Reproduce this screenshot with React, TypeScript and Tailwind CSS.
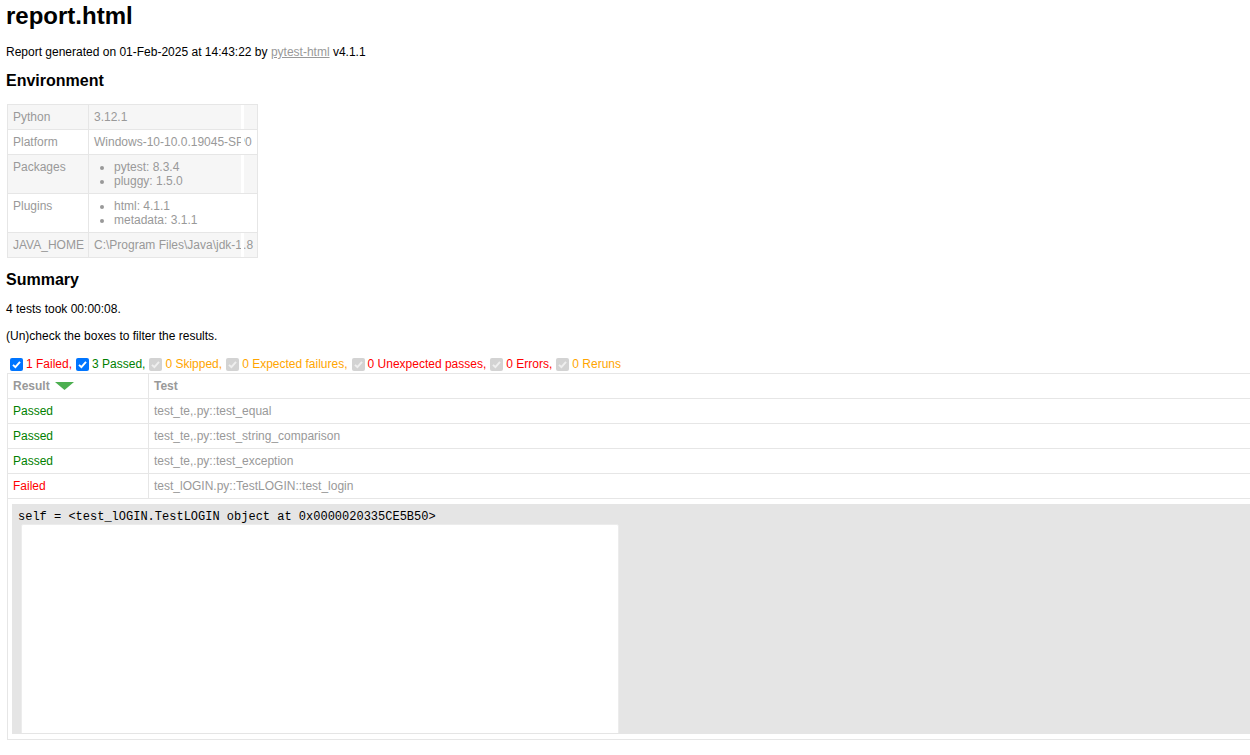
import React from "react";

type EnvRow = {
  label: string;
  value?: string;
  items?: string[];
  odd: boolean;
};

const envRows: EnvRow[] = [
  { label: "Python", value: "3.12.1", odd: true },
  { label: "Platform", value: "Windows-10-10.0.19045-SP0", odd: false },
  { label: "Packages", items: ["pytest: 8.3.4", "pluggy: 1.5.0"], odd: true },
  { label: "Plugins", items: ["html: 4.1.1", "metadata: 3.1.1"], odd: false },
  { label: "JAVA_HOME", value: "C:\\Program Files\\Java\\jdk-1.8", odd: true },
];

const filters = [
  { label: "1 Failed,", color: "text-[#ff0000]", on: true },
  { label: "3 Passed,", color: "text-[#008000]", on: true },
  { label: "0 Skipped,", color: "text-[#ffa500]", on: false },
  { label: "0 Expected failures,", color: "text-[#ffa500]", on: false },
  { label: "0 Unexpected passes,", color: "text-[#ff0000]", on: false },
  { label: "0 Errors,", color: "text-[#ff0000]", on: false },
  { label: "0 Reruns", color: "text-[#ffa500]", on: false },
];

const results = [
  { result: "Passed", test: "test_te,.py::test_equal" },
  { result: "Passed", test: "test_te,.py::test_string_comparison" },
  { result: "Passed", test: "test_te,.py::test_exception" },
  { result: "Failed", test: "test_lOGIN.py::TestLOGIN::test_login" },
];

const Checkbox = ({ on }: { on: boolean }) => (
  <span
    className={`ml-[4px] mr-[3px] flex h-[13px] w-[13px] items-center justify-center rounded-[2px] ${
      on ? "bg-[#0075ff]" : "bg-[#d3d3d3]"
    }`}
  >
    <svg width="11" height="11" viewBox="0 0 11 11">
      <path
        d="M2 5.8 L4.4 8.2 L9 2.8"
        fill="none"
        stroke={on ? "#ffffff" : "#efefef"}
        strokeWidth="1.9"
      />
    </svg>
  </span>
);

const App = () => {
  return (
    <div className="min-h-screen overflow-hidden bg-white px-[6px] font-['Liberation_Sans',Arial,sans-serif] text-[12px] leading-[14px] text-[#999]">
      <h1 className="pt-[2px] text-[24px] font-bold leading-[28px] text-black">
        report.html
      </h1>
      <p className="mt-[15px] text-black">
        Report generated on 01-Feb-2025 at 14:43:22 by{" "}
        <span className="text-[#999] underline">pytest-html</span> v4.1.1
      </p>
      <h2 className="mt-[13px] text-[16px] font-bold leading-[18px] text-black">
        Environment
      </h2>

      <div className="ml-[1px] mt-[14px] w-[251px] border border-[#e6e6e6]">
        {envRows.map((row, i) => (
          <div
            key={row.label}
            className={`flex ${i > 0 ? "border-t border-[#e6e6e6]" : ""} ${
              row.odd ? "bg-[#f6f6f6]" : "bg-white"
            }`}
          >
            <div className="w-[81px] shrink-0 border-r border-[#e6e6e6] p-[5px] whitespace-nowrap">
              {row.label}
            </div>
            <div className="w-[152px] shrink-0 overflow-hidden whitespace-nowrap p-[5px]">
              {row.value}
              {row.items && (
                <ul className="list-disc pl-[20px]">
                  {row.items.map((item) => (
                    <li key={item}>{item}</li>
                  ))}
                </ul>
              )}
            </div>
            <div className="w-[3px] shrink-0 bg-white" />
            <div className="flex-1 overflow-hidden whitespace-nowrap py-[5px]">
              {row.value && (
                <span className="ml-[-149px] block">{row.value}</span>
              )}
            </div>
          </div>
        ))}
      </div>

      <h2 className="mt-[13px] text-[16px] font-bold leading-[18px] text-black">
        Summary
      </h2>
      <p className="mt-[13px] text-black">4 tests took 00:00:08.</p>
      <p className="mt-[13px] text-black">
        (Un)check the boxes to filter the results.
      </p>

      <div className="mt-[13px] flex h-[17px] items-start">
        {filters.map((f) => (
          <div key={f.label} className="flex items-center pt-[1px]">
            <Checkbox on={f.on} />
            <span className={`${f.color} whitespace-nowrap`}>{f.label}</span>
          </div>
        ))}
      </div>

      <div className="ml-[1px] w-[1300px] border border-[#e6e6e6]">
        <div className="flex border-b border-[#e6e6e6] font-bold">
          <div className="flex w-[141px] shrink-0 items-center border-r border-[#e6e6e6] p-[5px]">
            Result
            <svg className="ml-[5px]" width="19" height="8" viewBox="0 0 19 8">
              <polygon points="0,0 19,0 9.5,8" fill="#4caf50" />
            </svg>
          </div>
          <div className="flex-1 p-[5px]">Test</div>
        </div>

        {results.map((r) => (
          <div key={r.test} className="flex border-b border-[#e6e6e6]">
            <div
              className={`w-[141px] shrink-0 border-r border-[#e6e6e6] p-[5px] ${
                r.result === "Passed" ? "text-[#008000]" : "text-[#ff0000]"
              }`}
            >
              {r.result}
            </div>
            <div className="flex-1 p-[5px]">{r.test}</div>
          </div>
        ))}

        <div className="py-[5px] pl-[4px]">
          <div className="h-[230px] overflow-hidden border border-[#e5e5e5] bg-[#e5e5e5] px-[5px] pt-[5px]">
            <div className="font-['Liberation_Mono','Courier_New',monospace] text-[12px] leading-[14px] text-black whitespace-pre">
              {"self = <test_lOGIN.TestLOGIN object at 0x0000020335CE5B50>"}
            </div>
            <div className="ml-[3px] mt-[0px] h-[260px] w-[598px] rounded-[2px] border border-[#ececec] bg-white" />
          </div>
        </div>
      </div>
    </div>
  );
};

export default App;
